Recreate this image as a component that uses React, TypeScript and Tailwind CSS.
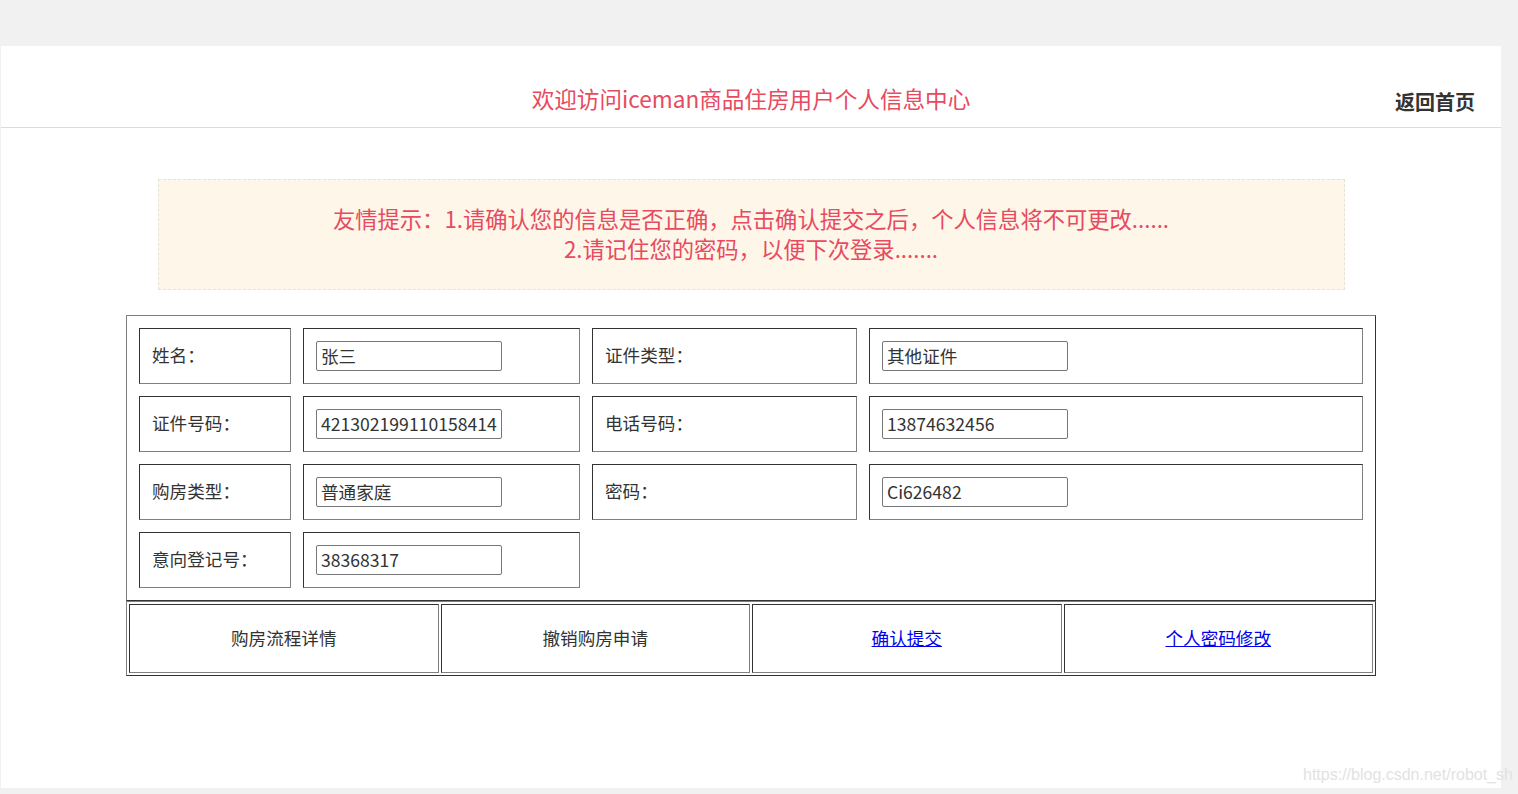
const font = { fontFamily: '"Noto Sans CJK SC", "Noto Sans", sans-serif' };

const fields: { label: string; value: string }[][] = [
  [
    { label: '姓名：', value: '张三' },
    { label: '证件类型：', value: '其他证件' },
  ],
  [
    { label: '证件号码：', value: '421302199110158414' },
    { label: '电话号码：', value: '13874632456' },
  ],
  [
    { label: '购房类型：', value: '普通家庭' },
    { label: '密码：', value: 'Ci626482' },
  ],
  [{ label: '意向登记号：', value: '38368317' }],
];

const actions = [
  { text: '购房流程详情', link: false },
  { text: '撤销购房申请', link: false },
  { text: '确认提交', link: true },
  { text: '个人密码修改', link: true },
];

// inset cell border, like an old table with border="1"
const cell =
  'border border-t-[#333] border-l-[#333] border-b-[#808080] border-r-[#808080] flex items-center';

function Field({ label, value }: { label: string; value: string }) {
  return (
    <>
      <div className={`${cell} pl-3 pb-[2px] text-[17.6px] text-[#333]`}>{label}</div>
      <div className={`${cell} pl-3`}>
        <input
          readOnly
          value={value}
          className="w-[186px] h-[30px] border border-[#767676] rounded-[2px] px-[4px] pb-[2px] text-[17.6px] text-[#333] bg-white outline-none"
          style={font}
        />
      </div>
    </>
  );
}

export default function App() {
  return (
    <div className="relative min-h-[794px] bg-[#f1f1f1] pt-[46px] pl-px" style={font}>
      <div className="w-[1500px] h-[742px] bg-white">
        {/* Header */}
        <div className="h-[82px] pt-[25px] grid grid-cols-[1fr_auto_1fr] items-center border-b border-[#dcdcdc]">
          <div />
          <h1 className="text-[22.6px] text-[#e84a5f] leading-none">欢迎访问iceman商品住房用户个人信息中心</h1>
          <div className="flex justify-end pt-[5px]">
            <a className="mr-[26px] text-[20px] font-bold text-[#333] cursor-pointer">返回首页</a>
          </div>
        </div>

        {/* Notice */}
        <div className="mt-[51px] mx-auto w-[1187px] h-[111px] pb-[4px] bg-[#fdf6e9] border border-dashed border-[#e6e2da] flex flex-col items-center justify-center text-[22.3px] leading-[30px] text-[#e84a5f]">
          <p>友情提示：1.请确认您的信息是否正确，点击确认提交之后，个人信息将不可更改......</p>
          <p>2.请记住您的密码，以便下次登录.......</p>
        </div>

        {/* Info table */}
        <div className="mt-[25px] mx-auto w-[1250px]">
          <div className="grid grid-cols-[152px_277px_265px_494px] auto-rows-[56px] gap-3 p-3 border border-t-[#808080] border-l-[#808080] border-b-[#333] border-r-[#333]">
            {fields.map((row, i) =>
              row.map((f, j) => <Field key={`${i}-${j}`} label={f.label} value={f.value} />)
            )}
          </div>

          <div className="grid grid-cols-4 gap-[2px] p-[2px] border border-t-[#808080] border-l-[#808080] border-b-[#333] border-r-[#333]">
            {actions.map((a) => (
              <div key={a.text} className={`${cell} h-[69px] justify-center text-[17.6px]`}>
                {a.link ? (
                  <a className="text-[#0000ee] underline cursor-pointer">{a.text}</a>
                ) : (
                  <span className="text-[#333]">{a.text}</span>
                )}
              </div>
            ))}
          </div>
        </div>
      </div>

      {/* watermark */}
      <div
        className="absolute left-[1303px] top-[763px] text-[16px] text-[#e2e2e2] whitespace-nowrap"
        style={{ fontFamily: '"Liberation Sans", Arial, sans-serif' }}
      >
        https://blog.csdn.net/robot_sh
      </div>
    </div>
  );
}
